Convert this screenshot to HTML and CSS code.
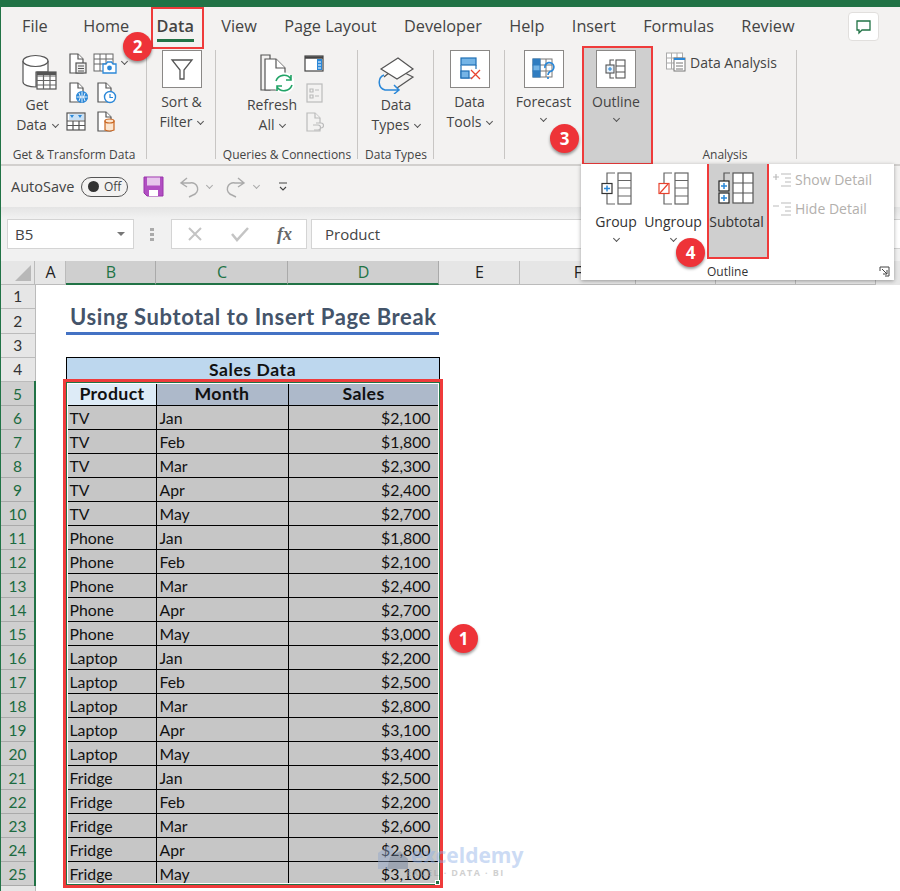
FILE: index.html
```html
<!DOCTYPE html>
<html lang="en">
  <head>
    <meta charset="UTF-8" />
    <meta name="viewport" content="width=device-width, initial-scale=1.0" />
    <title>Using Subtotal to Insert Page Break</title>
    <link rel="stylesheet" href="styles.css">
  </head>
  <body>
    <div class="app">
      <div class="titlebar"></div>

      <!-- Tabs -->
      <div class="tabs">
        <span class="tab tab-file">File</span>
        <span class="tab">Home</span>
        <span class="tab tab-active">Data</span>
        <span class="tab">View</span>
        <span class="tab">Page Layout</span>
        <span class="tab">Developer</span>
        <span class="tab">Help</span>
        <span class="tab">Insert</span>
        <span class="tab">Formulas</span>
        <span class="tab">Review</span>
        <span class="comment-btn">
          <svg width="16" height="16" viewBox="0 0 16 16" fill="none" stroke="#217346" stroke-width="1.3"><path d="M1 2H14V11H6L3 14V11H1Z"/></svg>
        </span>
      </div>

      <!-- Ribbon -->
      <div class="ribbon">
        <div class="group group-get">
          <div class="group-body">
            <div class="big big-plain big-get">
              <svg class="big-icon" width="36" height="36" viewBox="0 0 36 36" fill="#fff" stroke="#555" stroke-width="1.2"><path d="M1 7V28C1 31 7 33 14 33V18H26V7"/><ellipse cx="13.5" cy="7" rx="12.5" ry="5.5"/><rect x="15" y="18" width="19" height="17"/><path fill="none" stroke="#666" d="M15 22H34M15 26.5H34M15 31H34M21.5 18V35M28 18V35"/><path stroke="#555" stroke-width="3" d="M15 19.5H34"/></svg>
              <span>Get</span>
              <span>Data<i class="chev"></i></span>
            </div>
            <div class="small-grid">
              <svg width="22" height="22" viewBox="0 0 22 22" fill="#fff" stroke="#555" stroke-width="1.2"><path d="M3 1H11L16 6V20H3Z"/><path d="M11 1V6H16"/><rect x="9" y="10" width="10" height="10" fill="#eee"/><path d="M11 13H17M11 15.5H17M11 18H17"/></svg>
              <span class="small-cam">
                <svg width="24" height="22" viewBox="0 0 24 22" fill="#fff" stroke="#666" stroke-width="1"><rect x="1" y="1" width="19" height="17"/><path d="M1 6H20M1 11H20M7 1V18M13 1V18"/><path fill="#fff" stroke="#2b88d8" stroke-width="1.3" d="M10 11H13L14.5 9H18.5L20 11H23V20H10Z"/><circle cx="16.5" cy="15" r="2.4" fill="#2b88d8" stroke="none"/></svg>
                <i class="chev"></i>
              </span>
              <svg width="22" height="22" viewBox="0 0 22 22" fill="#fff" stroke="#555" stroke-width="1.2"><path d="M3 1H11L16 6V20H3Z"/><path d="M11 1V6H16"/><circle cx="15" cy="15" r="5.5" fill="#2b88d8" stroke="#2b88d8"/><path stroke="#fff" stroke-width=".9" fill="none" d="M9.5 15H20.5M15 9.5V20.5M12 11Q15 15 12 19M18 11Q15 15 18 19"/></svg>
              <svg class="small-shift" width="22" height="22" viewBox="0 0 22 22" fill="#fff" stroke="#555" stroke-width="1.2"><path d="M3 1H11L16 6V20H3Z"/><path d="M11 1V6H16"/><circle cx="15" cy="15" r="5.5" stroke="#2b88d8" stroke-width="1.4"/><path stroke="#2b88d8" fill="none" d="M15 12V15.5H18"/></svg>
              <svg class="small-left" width="22" height="22" viewBox="0 0 22 22" fill="#fff" stroke="#555" stroke-width="1.2"><rect x="2" y="2" width="18" height="17"/><path d="M2 10H20M2 14.5H20M8 10V19M14 10V19"/><path fill="#2b88d8" stroke="none" d="M4 3H19V9H4Z" opacity=".25"/><path fill="#2b88d8" stroke="none" d="M5 4H9L7 7ZM13 4H17L15 7Z"/></svg>
              <svg class="small-shift" width="22" height="22" viewBox="0 0 22 22" fill="#fff" stroke="#555" stroke-width="1.2"><path d="M3 1H11L16 6V20H3Z"/><path d="M11 1V6H16"/><path fill="#fbe6d0" stroke="#c8641e" d="M10 10V19Q14.5 21 19 19V10Z"/><ellipse cx="14.5" cy="10" rx="4.5" ry="2" fill="#fbe6d0" stroke="#c8641e"/></svg>
            </div>
          </div>
          <div class="group-label">Get &amp; Transform Data</div>
        </div>

        <div class="group group-sort">
          <div class="group-body">
            <div class="big">
              <span class="icon-box">
                <svg width="24" height="24" viewBox="0 0 24 24" fill="#fff" stroke="#555" stroke-width="1.3"><path d="M2 3H22L14 13V22H10V13Z"/></svg>
              </span>
              <span>Sort &amp;</span>
              <span>Filter<i class="chev"></i></span>
            </div>
          </div>
        </div>

        <div class="group group-queries">
          <div class="group-body">
            <div class="big big-plain big-refresh">
              <svg class="big-icon" width="36" height="40" viewBox="0 0 36 40" fill="#fff" stroke="#555" stroke-width="1.2"><path d="M3 1H12V36H3Z" fill="none"/><path d="M7 5H18L27 14V36H7Z"/><path d="M18 5V14H27"/><circle cx="26" cy="29" r="10" fill="#fff" stroke="#fff"/><path fill="none" stroke="#21a366" stroke-width="1.6" d="M18 27A8.5 8.5 0 0 1 33 25M34 31A8.5 8.5 0 0 1 19 33M33 21V26H28M19 37V32H24"/></svg>
              <span>Refresh</span>
              <span>All<i class="chev"></i></span>
            </div>
            <div class="small-col">
              <svg width="20" height="20" viewBox="0 0 20 20" fill="#fff" stroke="#444" stroke-width="1.2"><rect x="1" y="2" width="18" height="15"/><path stroke-width="2.5" d="M1 3.5H19"/><rect x="13" y="5" width="5" height="11" fill="#2b88d8" stroke="none"/><path stroke="#fff" d="M14 8H17M14 11H17M14 14H17"/></svg>
              <svg width="20" height="20" viewBox="0 0 20 20" fill="#f3f2f1" stroke="#bbb" stroke-width="1.2"><rect x="3" y="1" width="15" height="18"/><path d="M6 6H9V9H6ZM6 12H9V15H6ZM11 7H15M11 13H15"/></svg>
              <svg width="20" height="20" viewBox="0 0 20 20" fill="#f3f2f1" stroke="#bbb" stroke-width="1.2"><path d="M3 1H11L16 6V19H3Z"/><path d="M11 1V6H16"/><path d="M9 13H14A2 2 0 0 1 14 18H10M12 11H17A2 2 0 0 1 17 16"/></svg>
            </div>
          </div>
          <div class="group-label">Queries &amp; Connections</div>
        </div>

        <div class="group group-types">
          <div class="group-body">
            <div class="big big-plain">
              <svg class="big-icon big-icon-types" width="40" height="40" viewBox="0 0 40 40" fill="none" stroke="#555" stroke-width="1.2"><path d="M9 23L20 14L38 23L22 34" /><path d="M6 15L23 4L38 15L22 25Z" fill="#fff"/><path stroke="#2b88d8" stroke-width="1.5" d="M9 21A8 8 0 0 0 10 36H24M19 31L24 36L19 40"/></svg>
              <span>Data</span>
              <span>Types<i class="chev"></i></span>
            </div>
          </div>
          <div class="group-label">Data Types</div>
        </div>

        <div class="group group-tools">
          <div class="group-body">
            <div class="big">
              <span class="icon-box">
                <svg width="24" height="24" viewBox="0 0 24 24" fill="#fff" stroke="#1f6fb5" stroke-width="1.2"><rect x="3" y="1" width="15" height="7" fill="#74b4e6"/><path d="M3 8V21H14M18 8V12"/><rect x="3" y="14" width="8" height="7" fill="#74b4e6"/><path stroke="#e8432e" stroke-width="1.3" d="M13 13L22 22M22 13L13 22"/></svg>
              </span>
              <span>Data</span>
              <span>Tools<i class="chev"></i></span>
            </div>
          </div>
        </div>

        <div class="group group-forecast">
          <div class="group-body">
            <div class="big big-forecast">
              <span class="icon-box">
                <svg width="24" height="24" viewBox="0 0 24 24" fill="#fff" stroke="#777" stroke-width="1"><rect x="1" y="2" width="19" height="18"/><path d="M1 8H20M1 14H20M8 2V20M14 2V20"/><rect x="1" y="2" width="7" height="6" fill="#2f7cc0" stroke="#2f7cc0"/><rect x="1" y="8" width="7" height="6" fill="#74b4e6" stroke="#2f7cc0"/><rect x="1" y="14" width="7" height="6" fill="#2f7cc0" stroke="#2f7cc0"/><path fill="none" stroke="#2b88d8" stroke-width="1.7" d="M13 11A4.5 4.5 0 1 1 18 14.500Q16 16 16 18M16 20V22"/></svg>
              </span>
              <span>Forecast</span>
              <i class="chev chev-line"></i>
            </div>
            <div class="big big-outline">
              <span class="icon-box">
                <svg width="22" height="22" viewBox="0 0 22 22" fill="#fff" stroke="#555" stroke-width="1.1"><rect x="11" y="2" width="9" height="18"/><path d="M11 8H20M11 14H20M9 2H5V7M5 15V20H9"/><rect x="1" y="7" width="8" height="8" fill="#e8f2fb"/><path stroke="#2b88d8" d="M3 11H7M5 9V13"/></svg>
              </span>
              <span>Outline</span>
              <i class="chev chev-line"></i>
            </div>
          </div>
        </div>

        <div class="group group-analysis">
          <div class="group-body">
            <div class="small-row">
              <svg width="20" height="20" viewBox="0 0 20 20" fill="#fff" stroke="#aaa"><rect x="0.5" y="1" width="16" height="16"/><path d="M0.5 6H16.5M0.5 11H16.5M5.5 1V17M11 1V17"/><rect x="8" y="6" width="11" height="13" fill="#fff" stroke="#777"/><path stroke="#2b88d8" stroke-width="2" d="M8 7H19"/><path stroke="#777" d="M10 11H17M10 14H17M10 17H17"/></svg>
              <span>Data Analysis</span>
            </div>
          </div>
          <div class="group-label">Analysis</div>
        </div>
      </div>

      <!-- Quick access -->
      <div class="qat">
        <span class="qat-label">AutoSave</span>
        <span class="toggle"><i class="toggle-dot"></i>Off</span>
        <svg class="qat-save" width="21" height="21" viewBox="0 0 21 21" fill="#b14fc2" stroke="#9a35ab"><path d="M1 1H20V20H4L1 17Z"/><rect x="4" y="1.5" width="13" height="8" fill="#e7c6ec" stroke="none"/><rect x="6" y="14" width="9" height="6" fill="#fff" stroke="none"/></svg>
        <svg class="qat-undo" width="20" height="22" viewBox="0 0 20 22" fill="none" stroke="#aaa" stroke-width="1.4"><path d="M8 2L2 7L8 11M2 7H11A6 6 0 0 1 14 19L10 21"/></svg>
        <i class="chev chev-pale"></i>
        <svg class="qat-redo" width="20" height="22" viewBox="0 0 20 22" fill="none" stroke="#aaa" stroke-width="1.4"><path d="M12 2L18 7L12 11M18 7H9A6 6 0 0 0 6 19L10 21"/></svg>
        <i class="chev chev-pale"></i>
        <svg class="qat-more" width="10" height="10" viewBox="0 0 10 10" fill="none" stroke="#444" stroke-width="1.1"><path d="M1 1H9M2 5L5 8L8 5"/></svg>
      </div>
      <div class="shade"></div>

      <!-- Formula bar -->
      <div class="formula-bar">
        <div class="name-box">B5<i class="caret"></i></div>
        <i class="grip"></i>
        <div class="fx-buttons">
          <svg width="16" height="16" viewBox="0 0 16 16" fill="none" stroke="#c4c4c4" stroke-width="2"><path d="M2 2L14 14M14 2L2 14"/></svg>
          <svg width="18" height="16" viewBox="0 0 18 16" fill="none" stroke="#c4c4c4" stroke-width="2.5"><path d="M1 8L6 14L17 2"/></svg>
          <span class="fx">fx</span>
        </div>
        <div class="formula-input">Product</div>
      </div>

      <!-- Column headers -->
      <div class="col-head">
        <div class="corner"><i></i></div>
        <div class="col col-a">A</div>
        <div class="col col-b col-sel">B</div>
        <div class="col col-c col-sel">C</div>
        <div class="col col-d col-sel">D</div>
        <div class="col col-e">E</div>
        <div class="col col-f">F</div>
        <div class="col col-g"></div>
        <div class="col col-g"></div>
        <div class="col col-g"></div>
      </div>

      <!-- Sheet -->
      <div class="sheet">
        <table class="grid">
          <colgroup>
            <col class="w-rh" /><col class="w-a" /><col class="w-b" /><col class="w-c" /><col class="w-d" />
          </colgroup>
          <tr class="r1"><th>1</th><td colspan="4" class="blank"></td></tr>
          <tr class="r2"><th>2</th><td class="blank"></td><td colspan="3" class="blank title">Using Subtotal to Insert Page Break</td></tr>
          <tr class="r3"><th>3</th><td colspan="4" class="blank"></td></tr>
          <tr class="r4"><th>4</th><td class="blank"></td><td colspan="3" class="caption">Sales Data</td></tr>
          <tr class="head"><th>5</th><td class="blank"></td><td class="active">Product</td><td>Month</td><td>Sales</td></tr>
          <tr><th>6</th><td class="blank"></td><td>TV</td><td>Jan</td><td class="num">$2,100</td></tr>
          <tr><th>7</th><td class="blank"></td><td>TV</td><td>Feb</td><td class="num">$1,800</td></tr>
          <tr><th>8</th><td class="blank"></td><td>TV</td><td>Mar</td><td class="num">$2,300</td></tr>
          <tr><th>9</th><td class="blank"></td><td>TV</td><td>Apr</td><td class="num">$2,400</td></tr>
          <tr><th>10</th><td class="blank"></td><td>TV</td><td>May</td><td class="num">$2,700</td></tr>
          <tr><th>11</th><td class="blank"></td><td>Phone</td><td>Jan</td><td class="num">$1,800</td></tr>
          <tr><th>12</th><td class="blank"></td><td>Phone</td><td>Feb</td><td class="num">$2,100</td></tr>
          <tr><th>13</th><td class="blank"></td><td>Phone</td><td>Mar</td><td class="num">$2,400</td></tr>
          <tr><th>14</th><td class="blank"></td><td>Phone</td><td>Apr</td><td class="num">$2,700</td></tr>
          <tr><th>15</th><td class="blank"></td><td>Phone</td><td>May</td><td class="num">$3,000</td></tr>
          <tr><th>16</th><td class="blank"></td><td>Laptop</td><td>Jan</td><td class="num">$2,200</td></tr>
          <tr><th>17</th><td class="blank"></td><td>Laptop</td><td>Feb</td><td class="num">$2,500</td></tr>
          <tr><th>18</th><td class="blank"></td><td>Laptop</td><td>Mar</td><td class="num">$2,800</td></tr>
          <tr><th>19</th><td class="blank"></td><td>Laptop</td><td>Apr</td><td class="num">$3,100</td></tr>
          <tr><th>20</th><td class="blank"></td><td>Laptop</td><td>May</td><td class="num">$3,400</td></tr>
          <tr><th>21</th><td class="blank"></td><td>Fridge</td><td>Jan</td><td class="num">$2,500</td></tr>
          <tr><th>22</th><td class="blank"></td><td>Fridge</td><td>Feb</td><td class="num">$2,200</td></tr>
          <tr><th>23</th><td class="blank"></td><td>Fridge</td><td>Mar</td><td class="num">$2,600</td></tr>
          <tr><th>24</th><td class="blank"></td><td>Fridge</td><td>Apr</td><td class="num">$2,800</td></tr>
          <tr><th>25</th><td class="blank"></td><td>Fridge</td><td>May</td><td class="num">$3,100</td></tr>
          <tr class="r26"><th></th><td colspan="4" class="blank"></td></tr>
        </table>
      </div>

      <!-- Outline dropdown -->
      <div class="popup">
        <div class="popup-body">
          <div class="pop-btn pop-group">
            <svg width="31" height="34" viewBox="0 0 31 34" fill="#fff" stroke="#666" stroke-width="1.2"><rect x="17" y="1" width="13" height="31"/><path d="M17 8.500H30M17 16H30M17 24H30M14 1H6V11M6 22V32H14" fill="none"/><rect x="1" y="11.5" width="10" height="10" stroke="#333"/><path stroke="#2b88d8" stroke-width="1.5" d="M3 16.5H9M6 13.5V19.5"/></svg>
            <span>Group</span>
            <i class="chev chev-line"></i>
          </div>
          <div class="pop-btn pop-ungroup">
            <svg width="31" height="34" viewBox="0 0 31 34" fill="#fff" stroke="#666" stroke-width="1.2"><rect x="17" y="1" width="13" height="31"/><path d="M17 8.500H30M17 16H30M17 24H30M14 1H6V11M6 22V32H14" fill="none"/><rect x="1" y="11.5" width="10" height="10" stroke="#e8432e"/><path stroke="#e8432e" stroke-width="1.2" d="M2 21L10 12"/></svg>
            <span>Ungroup</span>
            <i class="chev chev-line"></i>
          </div>
          <div class="pop-btn pop-subtotal">
            <svg width="38" height="34" viewBox="0 0 38 34" fill="#fff" stroke="#555" stroke-width="1.2"><rect x="16" y="1" width="20" height="30"/><path d="M16 11H36M16 21H36M26 1V31M13 1H7V9" fill="none"/><rect x="2" y="9" width="10" height="10" stroke="#222"/><path stroke="#2b88d8" stroke-width="1.5" d="M4 14H10M7 11V17"/><rect x="2" y="21" width="10" height="10" stroke="#222"/><path stroke="#2b88d8" stroke-width="1.5" d="M4 26H10M7 23V29"/></svg>
            <span>Subtotal</span>
          </div>
          <div class="pop-detail">
            <div class="detail-row">
              <svg width="20" height="16" viewBox="0 0 20 16" fill="none" stroke="#bbb" stroke-width="1.2"><path d="M1 5H7M4 2V8M9 2H19M13 6H19M13 10H19M9 14H19"/></svg>
              <span>Show Detail</span>
            </div>
            <div class="detail-row">
              <svg width="20" height="16" viewBox="0 0 20 16" fill="none" stroke="#bbb" stroke-width="1.2"><path d="M1 5H7M9 2H19M13 6H19M13 10H19M9 14H19"/></svg>
              <span>Hide Detail</span>
            </div>
          </div>
        </div>
        <div class="popup-foot">
          <span>Outline</span>
          <svg width="11" height="11" viewBox="0 0 11 11" fill="none" stroke="#444"><path d="M1 5V1H10V10H6M3 3L8 8M8 4V8H4"/></svg>
        </div>
      </div>

      <!-- Annotations -->
      <div class="sel-box"><i class="sel-handle"></i></div>
      <span class="badge badge-1">1</span>
      <span class="badge badge-2">2</span>
      <span class="badge badge-3">3</span>
      <span class="badge badge-4">4</span>

      <div class="watermark">
        <svg width="30" height="26" viewBox="0 0 30 26"><path fill="#8fa6cc" d="M0 10L11 2L16 8L9 26H0Z"/><path fill="#6d7f9c" d="M12 14L22 8L30 16V26H9Z"/></svg>
        <div class="wm-text">
          <span class="wm-name">exceldemy</span>
          <span class="wm-sub">EXCEL · DATA · BI</span>
        </div>
      </div>
    </div>
  </body>
</html>
```

FILE: styles.css
```css
* {
  box-sizing: border-box;
}

html,
body {
  margin: 0;
  height: 891px;
  overflow: hidden;
  background: #fff;
}

.app {
  position: relative;
  width: 900px;
  height: 891px;
  overflow: hidden;
  border-left: 1px solid #217346;
  font-family: "Open Sans", sans-serif;
  color: #444;
}

.titlebar {
  height: 7px;
  background: #217346;
}

/* tabs */
.tabs {
  display: flex;
  align-items: center;
  height: 43px;
  padding: 0 0 5px 21px;
  gap: 27.4px;
  background: #f3f2f1;
  font-size: 16.3px;
}

.tab-file {
  margin-right: 8px;
}

.tab-active {
  position: relative;
  font-weight: 600;
}

.tab-active::before {
  content: "";
  position: absolute;
  left: -6px;
  right: -10px;
  top: -8px;
  height: 38px;
  border: 2px solid #ef3b3b;
}

.tab-active::after {
  content: "";
  position: absolute;
  left: 0;
  right: 0;
  bottom: -5px;
  height: 3px;
  background: #217346;
}

.comment-btn {
  display: flex;
  align-items: center;
  justify-content: center;
  position: absolute;
  left: 847px;
  top: 12px;
  width: 31px;
  height: 29px;
  background: #fff;
  border: 1px solid #e1dfdd;
  border-radius: 4px;
}

/* ribbon */
.ribbon {
  display: flex;
  height: 116px;
  background: #f3f2f1;
  border-bottom: 2px solid #d2d0ce;
}

.group {
  position: relative;
  display: flex;
  flex-direction: column;
  flex: none;
}

.group::after {
  content: "";
  position: absolute;
  right: 0;
  top: 0;
  height: 109px;
  width: 1px;
  background: #c8c6c4;
}

.group-body {
  display: flex;
  height: 96px;
}

.group-label {
  font-size: 12px;
  line-height: 18px;
  text-align: center;
  white-space: nowrap;
}

.group-get {
  width: 146px;
}

.group-sort {
  width: 69px;
}

.group-queries {
  width: 142px;
}

.group-types {
  width: 76px;
}

.group-tools {
  width: 71px;
}

.group-forecast {
  width: 148px;
}

.group-forecast::after {
  display: none;
}

.group-analysis {
  width: 144px;
}

.big {
  display: flex;
  flex-direction: column;
  align-items: center;
  flex: 1;
  font-size: 14px;
  line-height: 20px;
  white-space: nowrap;
}

.big-plain .big-icon {
  margin: 4px 0 1px;
}

.big-get {
  flex: none;
  width: 66px;
  padding-left: 6px;
}

.big-plain .big-icon-types {
  margin-left: -3px;
}

.big-get .big-icon {
  margin: 4px 0 5px 6px;
}

.big-refresh {
  flex: none;
  width: 64px;
  margin-left: 24px;
}

.big-refresh .big-icon {
  margin-left: 8px;
}

.icon-box {
  display: flex;
  align-items: center;
  justify-content: center;
  width: 40px;
  height: 38px;
  margin-bottom: 4px;
  background: #fff;
  border: 1px solid #8a8886;
}

.big-forecast {
  flex: none;
  width: 77px;
}

.big-outline {
  flex: none;
  width: 71px;
  height: 119px;
  margin-top: -4px;
  padding: 2px 3px 0 0;
  background: #cfcfcf;
  border: 2px solid #ef3b3b;
}

.chev {
  display: inline-block;
  width: 5px;
  height: 5px;
  margin: 0 0 3px 6px;
  border-right: 1.3px solid #555;
  border-bottom: 1.3px solid #555;
  transform: rotate(45deg);
}

.chev-line {
  margin: 4px 0 0;
}

.chev-pale {
  margin: 0 0 3px 0;
  border-color: #aaa;
}

.small-grid {
  display: grid;
  grid-template-columns: 26px 34px;
  grid-auto-rows: 29px;
  padding-top: 3px;
}

.small-shift {
  margin-left: 2px;
}

.small-left {
  margin-left: -2px;
}

.small-cam {
  display: flex;
  align-items: flex-start;
  white-space: nowrap;
}

.small-cam .chev {
  margin: 6px 0 0 5px;
}

.small-col {
  display: flex;
  flex-direction: column;
  gap: 9px;
  padding-top: 4px;
}

.small-row {
  display: flex;
  align-items: center;
  gap: 4px;
  height: 24px;
  padding-left: 13px;
  font-size: 14px;
  white-space: nowrap;
}

/* quick access */
.qat {
  display: flex;
  align-items: center;
  height: 41px;
  padding-left: 10px;
  background: #f3f2f1;
  font-size: 14.5px;
}

.toggle {
  display: flex;
  align-items: center;
  justify-content: space-between;
  width: 47px;
  height: 20px;
  margin-left: 7px;
  padding: 0 6px 0 6px;
  border: 1.3px solid #555;
  border-radius: 10px;
  font-size: 12px;
}

.toggle-dot {
  width: 11px;
  height: 11px;
  background: #333;
  border-radius: 50%;
}

.qat-save {
  margin-left: 15px;
}

.qat-undo {
  margin-left: 15px;
}

.qat-undo + .chev {
  margin-left: 8px;
}

.qat-redo {
  margin-left: 14px;
}

.qat-redo + .chev {
  margin-left: 8px;
}

.qat-more {
  margin-left: 19px;
}

.shade {
  height: 11px;
  background: linear-gradient(#e4e4e4, #f1f1f1);
}

/* formula bar */
.formula-bar {
  display: flex;
  align-items: center;
  height: 43px;
  padding: 1px 0 12px 6px;
  background: #f1f1f1;
  font-size: 15px;
}

.name-box {
  position: relative;
  width: 127px;
  height: 30px;
  padding-left: 7px;
  line-height: 28px;
  background: #fff;
  border: 1px solid #d4d4d4;
}

.caret {
  position: absolute;
  right: 8px;
  top: 12px;
  border: 4px solid transparent;
  border-top: 4px solid #777;
}

.grip {
  width: 4px;
  height: 13px;
  margin: 0 17px 0 16px;
  background: repeating-linear-gradient(#aaa 0 3px, transparent 3px 5px);
}

.fx-buttons {
  display: flex;
  align-items: center;
  width: 136px;
  height: 30px;
  padding-left: 15px;
  gap: 28px;
  background: #fff;
  border: 1px solid #d4d4d4;
}

.fx {
  font-family: "Liberation Serif", serif;
  font-style: italic;
  font-weight: 700;
  font-size: 18px;
  color: #666;
}

.formula-input {
  flex: 1;
  height: 30px;
  margin-left: 4px;
  padding-left: 13px;
  line-height: 28px;
  background: #fff;
  border: 1px solid #d4d4d4;
  border-right: none;
}

/* column headers */
.col-head {
  display: flex;
  height: 24px;
  background: #e6e6e6;
  font-size: 16px;
  line-height: 22px;
  color: #222;
}

.corner {
  position: relative;
  width: 34px;
  border-right: 1px solid #bbb;
  border-bottom: 1px solid #bbb;
}

.corner i {
  position: absolute;
  right: 3px;
  bottom: 3px;
  border-style: solid;
  border-width: 0 0 16px 16px;
  border-color: transparent transparent #b8b8b8 transparent;
}

.col {
  flex: none;
  padding-left: 1px;
  text-align: center;
  border-right: 1px solid #bbb;
  border-bottom: 1px solid #bbb;
}

.col-a {
  width: 31px;
}

.col-b {
  width: 90px;
}

.col-c {
  width: 132px;
}

.col-d {
  width: 151px;
}

.col-e {
  width: 81px;
}

.col-f {
  width: 116px;
}

.col-g {
  width: 80px;
}

.col-sel {
  background: #cfcfcf;
  border-right-color: #aaa;
  border-bottom: 2px solid #217346;
  color: #217346;
}

/* sheet */
.grid {
  table-layout: fixed;
  width: 438px;
  border-collapse: collapse;
  font-family: Lato, sans-serif;
  font-size: 15.8px;
  line-height: 20px;
  color: #111;
}

.w-rh {
  width: 34px;
}

.w-a {
  width: 31px;
}

.w-b {
  width: 90px;
}

.w-c {
  width: 132px;
}

.w-d {
  width: 151px;
}

.grid tr {
  height: 24px;
}

.grid .r1 {
  height: 23px;
}

.grid .r2 {
  height: 25px;
}

.grid th {
  padding: 1px 0 0;
  font-weight: 400;
  font-size: 15.5px;
  color: #1c6b41;
  background: #cfcfcf;
  border-bottom: 1px solid #aaa;
  border-right: 2px solid #217346;
}

.grid .r1 th,
.grid .r2 th,
.grid .r3 th,
.grid .r4 th,
.grid .r26 th {
  padding-top: 0;
  color: #333;
  background: #e6e6e6;
  border-bottom-color: #bbb;
  border-right: 1px solid #bbb;
}

.grid td {
  padding: 1px 3px 0;
  background: #c6c6c6;
  border: 1px solid #000;
  white-space: nowrap;
}

.grid td.blank {
  background: #fff;
  border: none;
}

.grid td.title {
  padding: 0 4px;
  vertical-align: top;
  font-size: 22px;
  line-height: 18px;
  letter-spacing: 0.6px;
  font-weight: 700;
  color: #44546a;
  border-bottom: 3px solid #4472c4;
}

.grid td.caption {
  text-align: center;
  font-size: 17.5px;
  letter-spacing: 0.6px;
  font-weight: 700;
  background: #bdd7ee;
}

.head td {
  text-align: center;
  font-size: 17.7px;
  letter-spacing: 0.4px;
  font-weight: 700;
  background: #adb9ca;
}

.grid .head td.blank {
  background: #fff;
}

.grid .head td.active {
  padding-left: 5px;
  background: #ddebf7;
}

.grid td.num {
  padding-right: 8px;
  text-align: right;
}

/* dropdown */
.popup {
  position: absolute;
  left: 580px;
  top: 164px;
  width: 313px;
  height: 116px;
  background: #fff;
  box-shadow: 0 1px 4px rgba(0, 0, 0, 0.35);
  font-size: 14px;
  z-index: 2;
}

.popup-body {
  display: flex;
  height: 95px;
  padding-left: 7px;
}

.pop-btn {
  display: flex;
  flex-direction: column;
  align-items: center;
  flex: none;
  padding-top: 8px;
  line-height: 20px;
  color: #333;
}

.pop-btn svg {
  margin-bottom: 6px;
}

.pop-group {
  width: 56px;
}

.pop-ungroup {
  width: 58px;
}

.pop-subtotal {
  width: 62px;
  margin-left: 5px;
  background: #cfcfcf;
  border: 2px solid #ef3b3b;
  border-top: none;
}

.pop-subtotal span {
  margin-right: 3px;
}

.pop-subtotal svg {
  margin-right: 4px;
}

.pop-detail {
  display: flex;
  flex-direction: column;
  gap: 9px;
  padding: 6px 0 0 3px;
  color: #b3b0ad;
}

.detail-row {
  display: flex;
  align-items: center;
  gap: 3px;
  line-height: 20px;
}

.popup-foot {
  display: flex;
  align-items: center;
  justify-content: space-between;
  height: 21px;
  padding: 3px 4px 0 126px;
  font-size: 12px;
  color: #333;
}

/* annotations */
.sel-box {
  position: absolute;
  left: 62px;
  top: 379px;
  width: 380px;
  height: 509px;
  border: 3px solid #ef3b3b;
  box-shadow: inset 0 0 0 1px #217346, inset 0 0 0 2px #fff;
  pointer-events: none;
}

.sel-handle {
  position: absolute;
  right: 0;
  bottom: 0;
  width: 5px;
  height: 5px;
  background: #217346;
  border: 1px solid #fff;
}

.badge {
  position: absolute;
  width: 29px;
  height: 29px;
  line-height: 29px;
  text-align: center;
  font-family: "Open Sans", sans-serif;
  font-size: 17px;
  font-weight: 700;
  color: #fff;
  background: #ee3338;
  border-radius: 50%;
  box-shadow: 0 2px 3px rgba(0, 0, 0, 0.4);
  z-index: 3;
}

.badge-1 {
  left: 448px;
  top: 624px;
}

.badge-2 {
  left: 122px;
  top: 32px;
}

.badge-3 {
  left: 549px;
  top: 124px;
}

.badge-4 {
  left: 675px;
  top: 238px;
}

.watermark {
  position: absolute;
  left: 377px;
  top: 843px;
  display: flex;
  gap: 3px;
  opacity: 0.45;
  z-index: 1;
}

.wm-text {
  display: flex;
  flex-direction: column;
}

.wm-name {
  font-family: "Open Sans", sans-serif;
  font-size: 21px;
  font-weight: 700;
  line-height: 24px;
  color: #8fb0e8;
}

.wm-sub {
  margin-left: -5px;
  font-size: 9px;
  font-weight: 700;
  line-height: 11px;
  letter-spacing: 1.4px;
  color: #999;
}
```
